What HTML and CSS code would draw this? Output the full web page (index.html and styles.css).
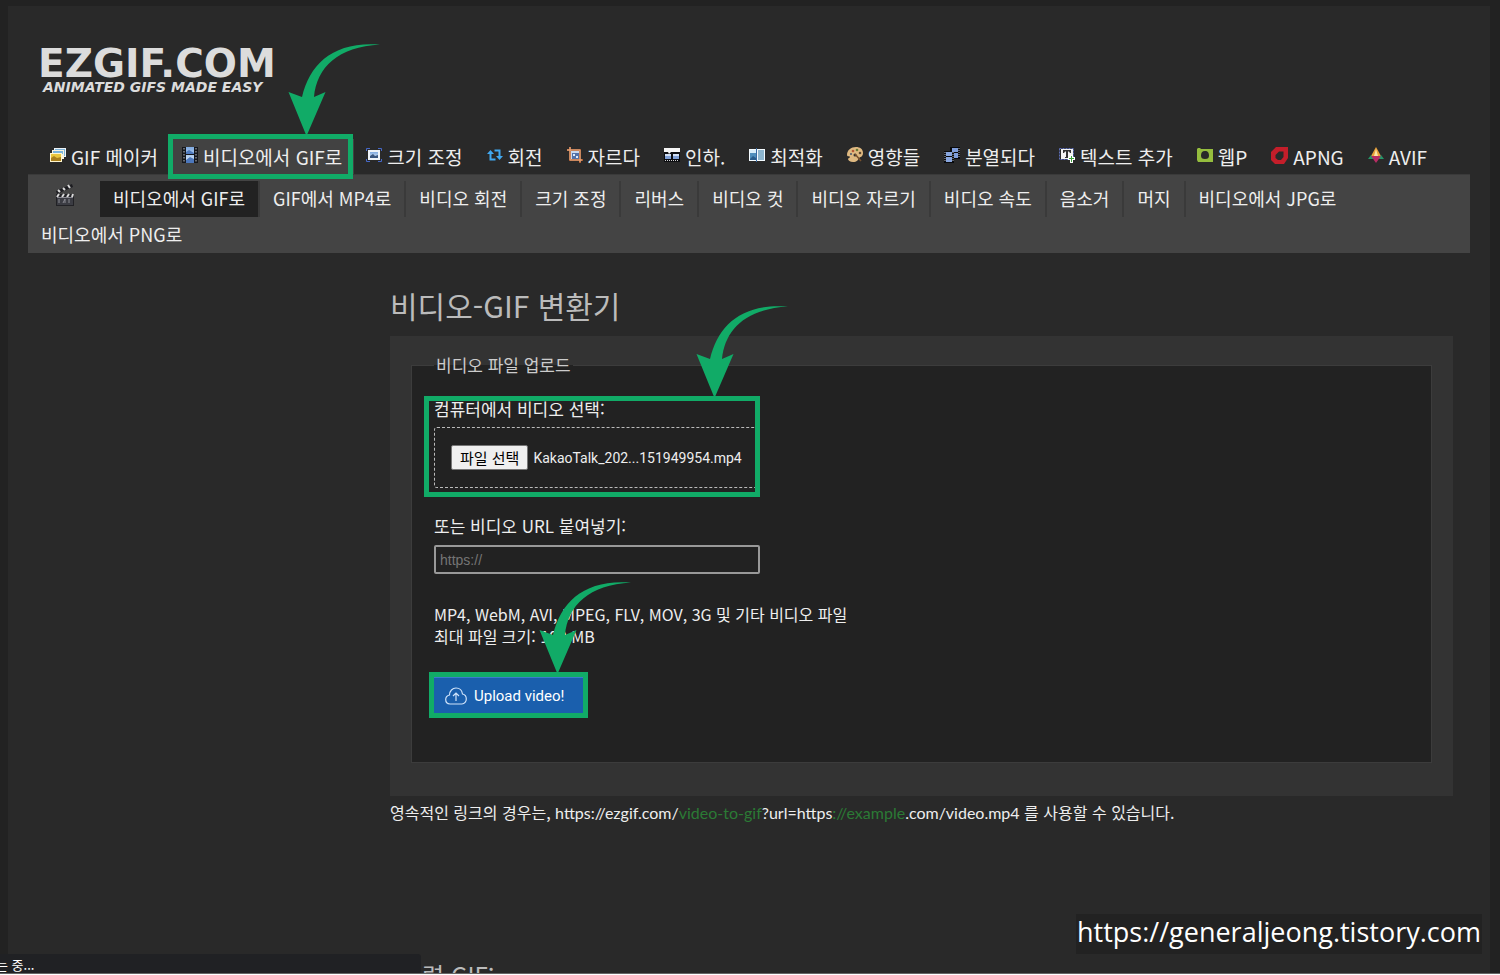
FILE: index.html
```html
<!DOCTYPE html>
<html lang="ko">
<head>
<meta charset="utf-8">
<title>비디오-GIF 변환기</title>
<link rel="stylesheet" href="styles.css">
</head>
<body>
<svg class="defs" width="0" height="0" aria-hidden="true">
  <defs>
    <linearGradient id="sky" x1="0" y1="0" x2="0" y2="1"><stop offset="0" stop-color="#7fa9e0"/><stop offset="1" stop-color="#dcebfa"/></linearGradient>
    <symbol id="arrow" viewBox="0 0 92 93"><path fill="#11ab67" d="M18.500 93L.5 49l13.500 5C22 20 46-2 92 1.500 50 4 29 24 26 54l11.500-5z"/></symbol>
  </defs>
</svg>
<div class="window">
  <div class="page">
    <header class="brand">
      <a class="logo" href="#">EZGIF.COM</a>
      <p class="tagline">ANIMATED GIFS MADE EASY</p>
    </header>

    <nav class="main-nav">
      <a href="#"><svg class="ico" viewBox="0 0 16 16"><path fill="#eef4f8" d="M4 1h12v9H4z"/><path fill="#7fb4d8" d="M5 2h10v7H5z"/><path fill="#f7f3df" d="M2 3h12v9H2z"/><path fill="#79b4dc" d="M3 4h10v3H3z"/><path fill="#fff6d0" d="M0 6h12v9H0z"/><path fill="#e9c73e" d="M1 7h10v7H1z"/><path fill="#a9801c" d="M1 14v-3l3-2 3 2 4-1v4z"/></svg>GIF 메이커</a>
      <a class="current" href="#"><svg class="ico" viewBox="0 0 16 16"><path fill="#15171c" d="M0 0h16v16H0z"/><path fill="url(#sky)" d="M4 0h8v7H4zM4 8h8v8H4z"/><path fill="#4d78bd" d="M4 5l3-2 5 3v1H4zM4 13l4-3 4 2v4H4z"/><path stroke="#b9bfc8" stroke-dasharray="1.500 1.500" d="M2 1v14M14 1v14"/></svg>비디오에서 GIF로
        <span class="mark mark-nav"><svg class="arrow"><use href="#arrow"/></svg></span></a>
      <a href="#"><svg class="ico" viewBox="0 0 16 16"><path fill="none" stroke="#4668c8" d="M.5 4V1.500H4M12 1.500h3.500V4M.5 12v2.500H4M12 14.500h3.500V12"/><path fill="#eef3f9" d="M2 3h12v10H2z"/><path fill="url(#sky)" d="M4 5h8v6H4z"/><path fill="#38557f" d="M4 11V9l3-2 2 2 3-1v3z"/></svg>크기 조정</a>
      <a href="#"><svg class="ico" viewBox="0 0 16 16"><path fill="none" stroke="#41a8f0" stroke-width="2" d="M8.500 12.500h-5V6M7.500 3.500h5V10"/><path fill="#41a8f0" d="M0 7l3.500-4L7 7zM9 9h7l-3.500 4z"/></svg>회전</a>
      <a href="#"><svg class="ico" viewBox="0 0 16 16"><path fill="#c8d8ef" d="M4 4h9v9H4z"/><path fill="#5271a8" d="M5 6h7v6H5z"/><path fill="#dceafa" d="M6 7h2v2H6zM9 9h2v2H9z"/><path fill="none" stroke="#a85c35" stroke-width="2" d="M3 0v13h13M0 3h13v13"/><path fill="none" stroke="#eab086" stroke-width="1" d="M3 0v13h12M0 3h13v12"/></svg>자르다</a>
      <a href="#"><svg class="ico" viewBox="0 0 16 16"><path fill="#0c0d10" d="M0 1h16v14H0z"/><path fill="#f5f5f5" d="M0 1h16v4H7L5 7 4 5H0z"/><path fill="#7f9fd6" d="M1 7h6v5H1zM9 7h6v5H9z"/><path fill="#d1def2" d="M1 7h6v2H1zM9 7h6v2H9z"/><path stroke="#d0d0d0" stroke-dasharray="1 1" d="M1 13.500h14"/></svg>인하.</a>
      <a href="#"><svg class="ico" viewBox="0 0 16 16"><path fill="#f4fbff" d="M0 2h16v12H0z"/><path fill="#4e8fbd" d="M1 3h6v10H1z"/><path fill="#d7eefb" d="M1 3h6v3H1z"/><path fill="#8db6cf" d="M9 3h6v10H9z"/><path fill="#275c8c" d="M1 12l3-3 3 2v2H1z"/><path fill="#3768a0" d="M7 1h1v14H7z"/></svg>최적화</a>
      <a href="#"><svg class="ico" viewBox="0 0 16 16"><path fill="#dfb981" d="M9 0c4 0 7 2 7 6s-3 4-4 5c-1 2-2 4-6 4-3 0-5-2-5-3s2-1 2-2-3 0-3-2C0 3 4 0 9 0z"/><circle cx="6" cy="4" r="1.300" fill="#b55b37"/><circle cx="10" cy="3" r="1.300" fill="#667b37"/><circle cx="13" cy="6" r="1.300" fill="#5e4830"/><circle cx="4" cy="7" r="1" fill="#48586e"/><circle cx="8" cy="8" r="1.500" fill="#323232"/><path stroke="#77502d" stroke-width="1.500" d="M8 7l6 7"/></svg>영향들</a>
      <a href="#"><svg class="ico" viewBox="0 0 16 16"><path fill="#08090c" d="M6 0h10v12H6zM0 4h10v12H0z"/><path fill="#7f9edb" d="M8 1h6v4H8zM10 6h4v5h-4z"/><path fill="#88a6df" d="M2 5h6v4H2zM2 10h6v5H2z"/><path stroke="#b6bcc8" stroke-dasharray="1 1" d="M15 1v10M1 5v10M9 5v10"/></svg>분열되다</a>
      <a href="#"><svg class="ico" viewBox="0 0 16 16"><path fill="none" stroke="#5d6fb8" stroke-dasharray="2 1" d="M.5 1.500h14v11H.5z"/><path fill="#f4f4f4" d="M2 2h12v10H2z"/><path fill="#333" d="M4 3h8v3h-1L10 4.500H9V10h1v1H6v-1h1V4.500H6L5 6H4z"/><path fill="#fff" d="M11 8h3v2h2v3h-2v3h-3v-3H9v-3h2z"/><path fill="#3ca33a" d="M12 9h1v2h2v1h-2v3h-1v-3h-2v-1h2z"/></svg>텍스트 추가</a>
      <a href="#"><svg class="ico" viewBox="0 0 16 16"><path fill="#95bd3e" fill-rule="evenodd" d="M1 1h2l1 1h12v13H1l-1-2V2zm7 3C5 4 4 6 4 8.500S5 12 8 12s4-1 4-3.500S11 4 8 4z"/></svg>웹P</a>
      <a href="#"><svg class="ico apng" viewBox="0 0 17 17"><path fill="#c41e2a" fill-rule="evenodd" d="M5 0h12v11l-4 6H4l-4-4V5zm3 4.500L4.500 8v3L7 13h3l2.500-3V4.500z"/></svg>APNG</a>
      <a href="#"><svg class="ico" viewBox="0 0 16 16"><path fill="#e8a13a" d="M8 0l5 9H3z"/><path fill="#fce5a4" d="M8 2l2 7H6z"/><path fill="#259668" d="M0 12l3-4 4 4zM16 12l-3-4-4 4z"/><path fill="#b82d64" d="M3 9h10l-5 7z"/></svg>AVIF</a>
    </nav>

    <nav class="sub-nav">
      <a class="clapper" href="#" aria-label="비디오"><svg width="20" height="22" viewBox="0 0 20 22"><path fill="#222226" d="M1 10h18v12H1z"/><path fill="#3b3c43" d="M2 13h16v8H2z"/><path fill="#1c1c20" d="M1 7L17 0l1 3L2 10z"/><path stroke="#dadada" stroke-width="2" d="M3 6l2 2M8 4l2 2M13 1l2 3M4 10l-2 3M9 10l-2 3M14 10l-2 3M18 10l-1 3"/><path fill="none" stroke="#898991" d="M4 15v4M8 19l2-4v4M14 15v4M2 13.500h16"/></svg></a>
      <a class="active" href="#">비디오에서 GIF로</a>
      <a href="#">GIF에서 MP4로</a>
      <a href="#">비디오 회전</a>
      <a href="#">크기 조정</a>
      <a href="#">리버스</a>
      <a href="#">비디오 컷</a>
      <a href="#">비디오 자르기</a>
      <a href="#">비디오 속도</a>
      <a href="#">음소거</a>
      <a href="#">머지</a>
      <a class="last" href="#">비디오에서 JPG로</a>
      <a class="last" href="#">비디오에서 PNG로</a>
    </nav>

    <main class="content">
      <h1>비디오-GIF 변환기</h1>
      <form class="panel">
        <fieldset>
          <legend>비디오 파일 업로드</legend>
          <div class="file-field">
            <p class="field-title">컴퓨터에서 비디오 선택:</p>
            <div class="dropzone">
              <input class="file-input" type="file" id="file">
              <label class="file-button" for="file">파일 선택</label>
              <span class="file-name">KakaoTalk_202...151949954.mp4</span>
            </div>
            <span class="mark mark-file"><svg class="arrow"><use href="#arrow"/></svg></span>
          </div>
          <label class="field-title" for="url">또는 비디오 URL 붙여넣기:</label>
          <input class="url" type="text" id="url" placeholder="https://">
          <p class="hint">MP4, WebM, AVI, MPEG, FLV, MOV, 3G 및 기타 비디오 파일<br>최대 파일 크기: 100 MB</p>
          <div class="submit">
            <button type="button"><svg width="22" height="18" viewBox="0 0 22 18" fill="none" stroke="#cfe3fa" stroke-width="1.200"><path d="M5 17C2 17 .7 15 .7 12.500S2.500 8.500 4.500 8C4.500 4 7.500 1 11 1s6 2.500 6.500 6c2.500.5 3.800 2.500 3.800 5S19.500 17 17 17zM11 14V6M8 9l3-3 3 3"/></svg>Upload video!</button>
            <span class="mark mark-submit"><svg class="arrow"><use href="#arrow"/></svg></span>
          </div>
        </fieldset>
      </form>
      <p class="permalink">영속적인 링크의 경우는, <span class="address">https://ezgif.com/<em>video-to-gif</em>?url=https<em>://example</em>.com/video.mp4</span> 를 사용할 수 있습니다.</p>
      <h2>출력 GIF:</h2>
    </main>
  </div>
  <div class="status"><span>는 중...</span></div>
  <div class="watermark">https://generaljeong.tistory.com</div>
</div>
</body>
</html>
```
FILE: styles.css
```css
* { box-sizing: border-box; }

body {
  margin: 0;
  background: #fff;
  color: #eee;
  font-family: "Noto Sans CJK KR", "Open Sans", sans-serif;
  font-size: 16px;
  line-height: 22px;
}

a { color: inherit; text-decoration: none; }
p, h1, h2 { margin: 0; }
.defs { position: absolute; }

.window {
  position: relative;
  height: calc(100vh - 1px);
  overflow: hidden;
  padding: 6px 10px 0 8px;
  background: #222;
  border-bottom: 1px solid #666;
}

.page {
  min-height: 100%;
  padding: 42px 20px 0;
  background: #292929;
}

.brand {
  height: 91px;
  padding-left: 10px;
  color: #dcdcdc;
  font-family: "DejaVu Sans", sans-serif;
  font-weight: bold;
}
.logo { display: block; font-size: 39px; line-height: 32px; }
.tagline { padding-left: 5px; font-size: 14px; font-style: italic; line-height: 14px; }

.main-nav { display: flex; padding-left: 10px; font-size: 19px; }
.main-nav a {
  position: relative;
  display: flex;
  gap: 5px;
  height: 35px;
  padding: 0 12px;
  line-height: 35px;
  white-space: nowrap;
}
.main-nav .current { background: #424242; }
.ico { width: 16px; height: 16px; margin-top: 8px; flex: none; }
.apng { width: 17px; height: 17px; }

.sub-nav {
  display: flex;
  flex-wrap: wrap;
  padding-top: 6px;
  background: #444;
  border-top: 1px solid #3a3a3a;
  font-size: 18px;
}
.sub-nav a {
  height: 36px;
  padding: 0 13px;
  border-right: 2px solid #3a3a3a;
  line-height: 34px;
}
.sub-nav .clapper { width: 72px; padding: 3px 27px 0; border: 0; line-height: 0; }
.sub-nav .active { background: #222; }
.sub-nav .last { border: 0; }

.content { padding: 35px 17px 0 362px; }
h1 { color: #bbb; font-size: 30px; font-weight: 400; line-height: 34px; }

.panel { margin-top: 14px; padding: 18px 21px 33px; background: #333; }
fieldset {
  margin: 0;
  min-width: 0;
  padding: 22px 22px 48px;
  background: #222;
  border: 1px solid #3c3c3c;
}
legend { padding: 0 2px; color: #ccc; font-size: 17px; }

.file-field { position: relative; width: 326px; margin-bottom: 27px; }
.field-title { display: block; font-size: 17px; line-height: 22px; }
.dropzone {
  display: flex;
  align-items: center;
  gap: 5px;
  height: 61px;
  margin-top: 7px;
  padding: 0 16px;
  border: 1px dashed #bbb;
  border-radius: 3px;
}
.file-input { position: absolute; width: 1px; height: 1px; opacity: 0; }
.file-button {
  padding: 0 8px;
  background: #efefef;
  border: 1px solid #767676;
  border-radius: 2px;
  color: #000;
  font-size: 15px;
  line-height: 23px;
  white-space: nowrap;
}
.file-name { font-family: Roboto, sans-serif; font-size: 14px; white-space: nowrap; }

.url {
  display: block;
  width: 326px;
  height: 29px;
  margin-top: 8px;
  padding: 0 4px;
  background: #222;
  border: 2px solid #999;
  border-radius: 2px;
  color: #eee;
  font-family: "Liberation Sans", sans-serif;
  font-size: 14px;
}
.url::placeholder { color: #757575; }

.hint { margin-top: 29px; }
.submit { position: relative; width: 149px; margin-top: 30px; }
.submit button {
  display: flex;
  align-items: center;
  gap: 7px;
  width: 100%;
  height: 37px;
  padding: 0 11px;
  background: #1a5fad;
  border: 0;
  border-top: 1px solid #3b7ccc;
  color: #fff;
  font-family: Roboto, sans-serif;
  font-size: 15px;
}

.permalink { margin-top: 5px; }
.address { font-family: Lato, sans-serif; }
.permalink em { color: #2b7a35; font-style: normal; }
h2 {
  margin-top: 133px;
  padding-left: 10px;
  color: #bbb;
  font-size: 24px;
  font-weight: 400;
  line-height: 36px;
}

/* Step highlights */
.mark {
  position: absolute;
  z-index: 2;
  border: 5px solid #11ab67;
  pointer-events: none;
}
.mark-nav { inset: -5px 1px -5px -2px; }
.mark-file { inset: -2px 0 -9px -10px; }
.mark-submit { inset: -5px -5px -4px -5px; }
.arrow { position: absolute; bottom: calc(100% + 3px); width: 92px; height: 93px; }
.mark-nav .arrow { left: 115px; }
.mark-file .arrow { left: 267px; }
.mark-submit .arrow { left: 105px; }

.status {
  position: absolute;
  left: 0;
  bottom: 0;
  width: 421px;
  height: 19px;
  overflow: hidden;
  background: #202124;
  border-top-right-radius: 3px;
  color: #fff;
  font-size: 13px;
  line-height: 22px;
}
.status span { margin-left: -4px; }

.watermark {
  position: absolute;
  right: 18px;
  bottom: 19px;
  padding: 0 1px 4px;
  background: #222;
  color: #fff;
  font-family: "Open Sans", sans-serif;
  font-size: 27px;
  line-height: 36px;
}
```
